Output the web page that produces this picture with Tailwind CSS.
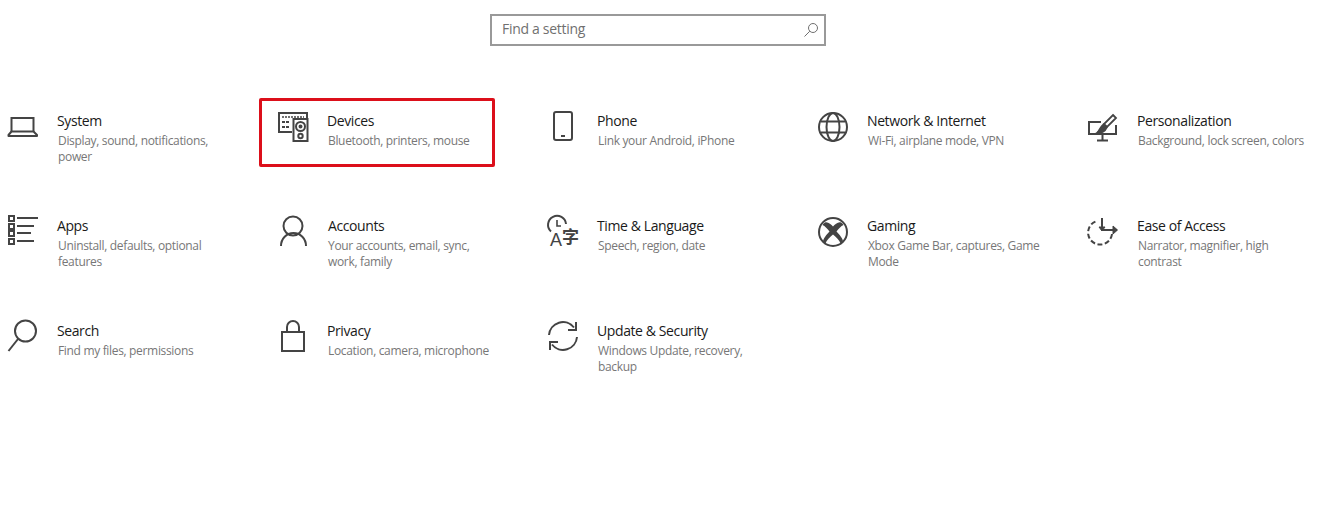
<!DOCTYPE html>
<html lang="en">
<head>
    <meta charset="UTF-8">
    <title>Settings</title>
    <script src="https://cdn.jsdelivr.net/npm/@tailwindcss/browser@4"></script>
</head>
<body class="bg-white font-['Open_Sans',sans-serif] overflow-hidden">
    <div class="relative w-[1340px] h-[508px]">
        <!-- search -->
        <div class="flex pt-[14px] pl-[490px]">
            <div class="flex items-center justify-between w-[336px] h-[32px] border-2 border-[#999] pl-[10px] pr-[5px]">
                <span class="text-[14px] leading-[18px] pb-[3px] tracking-[-0.3px] text-[#707070]">Find a setting</span>
                <svg class="w-[16px] h-[16px]" viewBox="0 0 16 16" fill="none" stroke="#707070" stroke-width="1"><circle cx="10" cy="6" r="4.5"/><path d="M1.5 14.5L6.8 9.2"/></svg>
            </div>
        </div>

        <!-- grid -->
        <div class="grid grid-cols-[repeat(5,270px)] auto-rows-[105px] mt-[62px]">
            <div class="flex pl-[6px] gap-[15px]">
                <svg class="w-[36px] h-[36px] shrink-0" viewBox="0 0 36 36" fill="none" stroke="#444" stroke-width="2"><path d="M5.5 24V10H27.5V24"/><path d="M5.5 23.5L2.5 27V28H31V27L27.5 23.5Z" stroke-linejoin="round"/></svg>
                <div class="pt-[3px] w-[175px]">
                    <div class="text-[14px] leading-[20px] tracking-[-0.4px] text-[#1a1a1a]">System</div>
                    <div class="mt-[2px] ml-[1px] text-[12px] leading-[16px] tracking-[-0.33px] text-[#777]">Display, sound, notifications, power</div>
                </div>
            </div>
            <div class="flex pl-[6px] gap-[15px]">
                <svg class="w-[36px] h-[36px] shrink-0" viewBox="0 0 36 36" fill="none" stroke="#444" stroke-width="2"><path d="M16 24H3V5H31V10"/><path d="M6 9H28" stroke-width="1.5" stroke-dasharray="2 1"/><path d="M6 14H14M6 19H14" stroke-width="2" stroke-dasharray="3 1"/><rect x="17.5" y="11" width="14" height="22"/><circle cx="24.5" cy="18.5" r="4.5"/><circle cx="24.5" cy="18.5" r="1" fill="#444"/><circle cx="24.5" cy="28" r="2.2"/></svg>
                <div class="pt-[3px] w-[175px]">
                    <div class="text-[14px] leading-[20px] tracking-[-0.4px] text-[#1a1a1a]">Devices</div>
                    <div class="mt-[2px] ml-[1px] text-[12px] leading-[16px] tracking-[-0.33px] text-[#777]">Bluetooth, printers, mouse</div>
                </div>
            </div>
            <div class="flex pl-[6px] gap-[15px]">
                <svg class="w-[36px] h-[36px] shrink-0" viewBox="0 0 36 36" fill="none" stroke="#444" stroke-width="2"><rect x="8" y="4" width="18" height="28" rx="2"/><path d="M15 28H19"/></svg>
                <div class="pt-[3px] w-[175px]">
                    <div class="text-[14px] leading-[20px] tracking-[-0.4px] text-[#1a1a1a]">Phone</div>
                    <div class="mt-[2px] ml-[1px] text-[12px] leading-[16px] tracking-[-0.33px] text-[#777]">Link your Android, iPhone</div>
                </div>
            </div>
            <div class="flex pl-[6px] gap-[15px]">
                <svg class="w-[36px] h-[36px] shrink-0" viewBox="0 0 36 36" fill="none" stroke="#444" stroke-width="2"><circle cx="17" cy="19" r="14"/><ellipse cx="17" cy="19" rx="6.5" ry="14"/><path d="M5 13.5H29M5 24.5H29"/></svg>
                <div class="pt-[3px] w-[175px]">
                    <div class="text-[14px] leading-[20px] tracking-[-0.4px] text-[#1a1a1a]">Network &amp; Internet</div>
                    <div class="mt-[2px] ml-[1px] text-[12px] leading-[16px] tracking-[-0.33px] text-[#777]">Wi-Fi, airplane mode, VPN</div>
                </div>
            </div>
            <div class="flex pl-[6px] gap-[15px]">
                <svg class="w-[36px] h-[36px] shrink-0" viewBox="0 0 36 36" fill="none" stroke="#444" stroke-width="2"><path d="M15 14H3V26H30V17"/><path d="M16.5 26V32M11 32.5H22"/><path d="M27 7L30 10L21 19L18 16Z" stroke-width="1.8"/><path d="M17.5 16.5L20.5 19.5C19 23 15 25 11 25C14 23 14 19 17.5 16.5Z" fill="#444"/></svg>
                <div class="pt-[3px] w-[175px]">
                    <div class="text-[14px] leading-[20px] tracking-[-0.4px] text-[#1a1a1a]">Personalization</div>
                    <div class="mt-[2px] ml-[1px] text-[12px] leading-[16px] tracking-[-0.33px] text-[#777]">Background, lock screen, colors</div>
                </div>
            </div>

            <div class="flex pl-[6px] gap-[15px]">
                <svg class="w-[36px] h-[36px] shrink-0" viewBox="0 0 36 36" fill="none" stroke="#444" stroke-width="2"><rect x="3" y="3" width="5" height="5"/><rect x="3" y="11" width="5" height="5"/><rect x="3" y="18" width="5" height="5"/><rect x="3" y="26" width="5" height="5"/><path d="M11 5H32M11 13H28M11 20H25M11 28H28"/></svg>
                <div class="pt-[3px] w-[175px]">
                    <div class="text-[14px] leading-[20px] tracking-[-0.4px] text-[#1a1a1a]">Apps</div>
                    <div class="mt-[2px] ml-[1px] text-[12px] leading-[16px] tracking-[-0.33px] text-[#777]">Uninstall, defaults, optional features</div>
                </div>
            </div>
            <div class="flex pl-[6px] gap-[15px]">
                <svg class="w-[36px] h-[36px] shrink-0" viewBox="0 0 36 36" fill="none" stroke="#444" stroke-width="2"><circle cx="17" cy="13" r="9.5"/><path d="M5 33A12.5 13 0 0 1 30 33"/></svg>
                <div class="pt-[3px] w-[175px]">
                    <div class="ml-[1px] text-[14px] leading-[20px] tracking-[-0.4px] text-[#1a1a1a]">Accounts</div>
                    <div class="mt-[2px] ml-[1px] text-[12px] leading-[16px] tracking-[-0.33px] text-[#777]">Your accounts, email, sync,<br>work, family</div>
                </div>
            </div>
            <div class="flex pl-[6px] gap-[15px]">
                <svg class="w-[36px] h-[36px] shrink-0" viewBox="0 0 36 36" fill="none" stroke="#444" stroke-width="2"><path d="M5 18.5A9 9 0 1 1 20 11"/><path d="M11 7V13H15" stroke-width="1.6"/><text x="4" y="33" font-size="18" fill="#444" stroke="none" font-family="Liberation Sans">A</text><text x="16" y="30" font-size="17" font-weight="700" fill="#444" stroke="none" font-family="Noto Sans CJK SC">字</text></svg>
                <div class="pt-[3px] w-[175px]">
                    <div class="text-[14px] leading-[20px] tracking-[-0.4px] text-[#1a1a1a]">Time &amp; Language</div>
                    <div class="mt-[2px] ml-[1px] text-[12px] leading-[16px] tracking-[-0.33px] text-[#777]">Speech, region, date</div>
                </div>
            </div>
            <div class="flex pl-[6px] gap-[15px]">
                <svg class="w-[36px] h-[36px] shrink-0" viewBox="0 0 36 36" fill="none" stroke="#444" stroke-width="2"><circle cx="17" cy="19" r="14"/><path d="M9 9.5C12 8.5 15 11.5 17 13.5C19 11.5 22 8.5 25 9.5C26 10 27 11 27.5 12C25 13 22.5 16 20.5 18.5C23.5 21.5 27 26 27 28.5C26.5 29.5 25.5 30 24.5 30.5C23.5 27 20 24 17 21.5C14 24 10.5 27 9.5 30.5C8.5 30 7.5 29.5 7 28.5C7 26 10.5 21.5 13.5 18.5C11.5 16 9 13 6.5 12C7 11 8 10 9 9.5Z" fill="#444" stroke="none"/></svg>
                <div class="pt-[3px] w-[175px]">
                    <div class="text-[14px] leading-[20px] tracking-[-0.4px] text-[#1a1a1a]">Gaming</div>
                    <div class="mt-[2px] ml-[1px] text-[12px] leading-[16px] tracking-[-0.33px] text-[#777]">Xbox Game Bar, captures, Game Mode</div>
                </div>
            </div>
            <div class="flex pl-[6px] gap-[15px]">
                <svg class="w-[36px] h-[36px] shrink-0" viewBox="0 0 36 36" fill="none" stroke="#444" stroke-width="2"><path d="M26 21A12 12 0 1 1 11 8" stroke-dasharray="5 2.5"/><path d="M16 5V17H31"/><path d="M13 14L16 18L19 14Z" fill="#444" stroke-width="1"/><path d="M27 13L31.5 17L27 21Z" fill="#444" stroke-width="1"/></svg>
                <div class="pt-[3px] w-[175px]">
                    <div class="text-[14px] leading-[20px] tracking-[-0.4px] text-[#1a1a1a]">Ease of Access</div>
                    <div class="mt-[2px] ml-[1px] text-[12px] leading-[16px] tracking-[-0.33px] text-[#777]">Narrator, magnifier, high contrast</div>
                </div>
            </div>

            <div class="flex pl-[6px] gap-[15px]">
                <svg class="w-[36px] h-[36px] shrink-0" viewBox="0 0 36 36" fill="none" stroke="#444" stroke-width="2"><circle cx="19.5" cy="13" r="10.5"/><path d="M2.5 33L12 21"/></svg>
                <div class="pt-[3px] w-[175px]">
                    <div class="text-[14px] leading-[20px] tracking-[-0.4px] text-[#1a1a1a]">Search</div>
                    <div class="mt-[2px] ml-[1px] text-[12px] leading-[16px] tracking-[-0.33px] text-[#777]">Find my files, permissions</div>
                </div>
            </div>
            <div class="flex pl-[6px] gap-[15px]">
                <svg class="w-[36px] h-[36px] shrink-0" viewBox="0 0 36 36" fill="none" stroke="#444" stroke-width="2"><rect x="6" y="14" width="22" height="19"/><path d="M11 14V9A6 6 0 0 1 23 9V14"/></svg>
                <div class="pt-[3px] w-[175px]">
                    <div class="text-[14px] leading-[20px] tracking-[-0.4px] text-[#1a1a1a]">Privacy</div>
                    <div class="mt-[2px] ml-[1px] text-[12px] leading-[16px] tracking-[-0.33px] text-[#777]">Location, camera, microphone</div>
                </div>
            </div>
            <div class="flex pl-[6px] gap-[15px]">
                <svg class="w-[36px] h-[36px] shrink-0" viewBox="0 0 36 36" fill="none" stroke="#444" stroke-width="2"><path d="M3 17A14 14 0 0 1 28 9.5"/><path d="M31 19A14 14 0 0 1 6 26.5"/><path d="M30 4V12H22"/><path d="M4 32V24H12"/></svg>
                <div class="pt-[3px] w-[175px]">
                    <div class="text-[14px] leading-[20px] tracking-[-0.4px] text-[#1a1a1a]">Update &amp; Security</div>
                    <div class="mt-[2px] ml-[1px] text-[12px] leading-[16px] tracking-[-0.33px] text-[#777]">Windows Update, recovery, backup</div>
                </div>
            </div>
        </div>

        <!-- red highlight over Devices -->
        <div class="absolute left-[259px] top-[98px] w-[236px] h-[69px] border-[3px] border-[#dc0f1a] rounded-[2px]"></div>
    </div>
</body>
</html>
